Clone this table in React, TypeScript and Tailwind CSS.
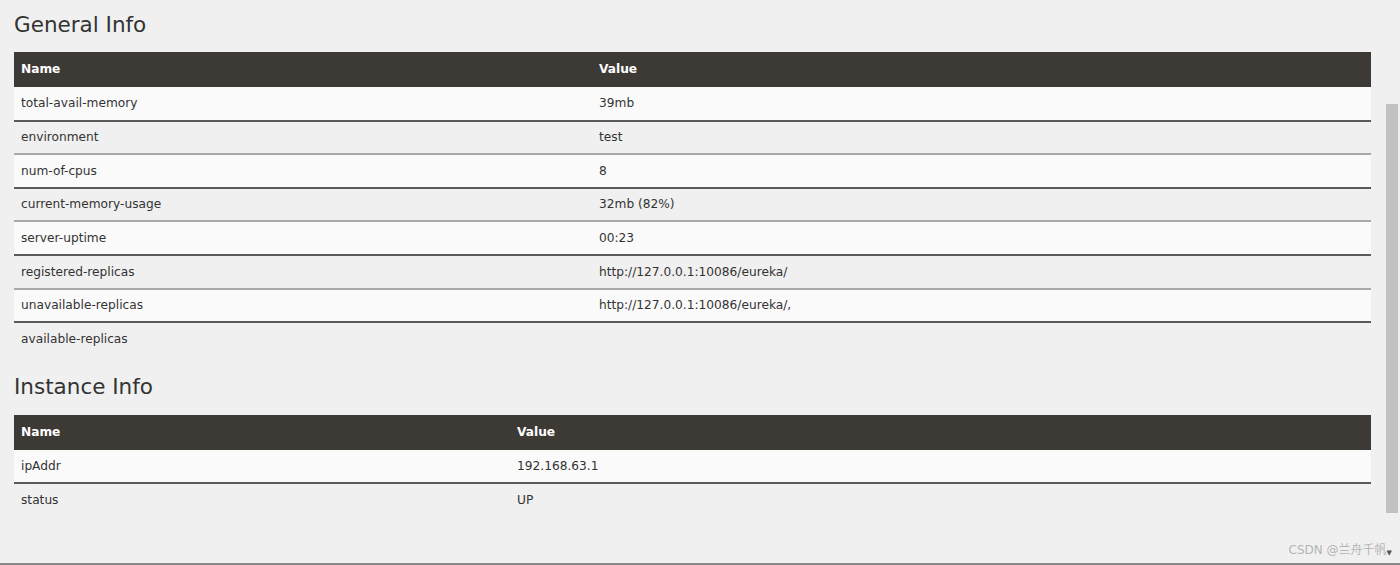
import React from "react";

const general = [
  ["total-avail-memory", "39mb"],
  ["environment", "test"],
  ["num-of-cpus", "8"],
  ["current-memory-usage", "32mb (82%)"],
  ["server-uptime", "00:23"],
  ["registered-replicas", "http://127.0.0.1:10086/eureka/"],
  ["unavailable-replicas", "http://127.0.0.1:10086/eureka/,"],
  ["available-replicas", ""],
];

const instance = [
  ["ipAddr", "192.168.63.1"],
  ["status", "UP"],
];

function InfoTable({ rows, nameWidth }: { rows: string[][]; nameWidth: string }) {
  return (
    <table className="w-full border-collapse text-[12.2px] text-[#333]">
      <thead>
        <tr className="bg-[#3d3935] text-white h-[35px]">
          <th className={`${nameWidth} text-left font-bold px-[7px]`}>Name</th>
          <th className="text-left font-bold px-[7px]">Value</th>
        </tr>
      </thead>
      <tbody>
        {rows.map((r, i) => (
          <tr
            key={r[0]}
            className={`h-[33.6px] ${i % 2 === 0 ? "bg-[#fafafa]" : "bg-[#f0f0f0]"} ${
              i === rows.length - 1
                ? ""
                : i % 2 === 0
                ? "border-b-2 border-[#5a5a5a]"
                : "border-b-2 border-[#a8a8a8]"
            }`}
          >
            <td className="px-[7px]">{r[0]}</td>
            <td className="px-[7px]">{r[1]}</td>
          </tr>
        ))}
      </tbody>
    </table>
  );
}

export default function App() {
  return (
    <div
      className="w-[1400px] h-[565px] bg-[#f0f0f0] flex flex-col overflow-hidden"
      style={{ fontFamily: '"DejaVu Sans", "Noto Sans CJK SC", sans-serif' }}
    >
      <div className="flex flex-1">
        <div className="w-[1371px] pl-[14px]">
          <h1 className="text-[21.5px] text-[#333] pt-[10px] leading-[30px] h-[52px]">General Info</h1>
          <InfoTable rows={general} nameWidth="w-[578px]" />
          <h1 className="text-[21.5px] text-[#333] pt-[16px] leading-[30px] h-[59px]">Instance Info</h1>
          <InfoTable rows={instance} nameWidth="w-[496px]" />
        </div>
        <div className="flex-1 pl-[15px] pt-[104px]">
          <div className="w-[12px] h-[409px] bg-[#c1c1c1]" />
        </div>
      </div>
      <div className="h-[30px] flex items-start justify-end pr-[8px] pt-[8px]">
        <span className="text-[12px] text-[#b5b5b5]">CSDN @兰舟千帆</span>
        <span className="text-[7px] text-[#555] mt-[7px]">▼</span>
      </div>
      <div className="h-[2px] bg-[#8a8a8a]" />
    </div>
  );
}
